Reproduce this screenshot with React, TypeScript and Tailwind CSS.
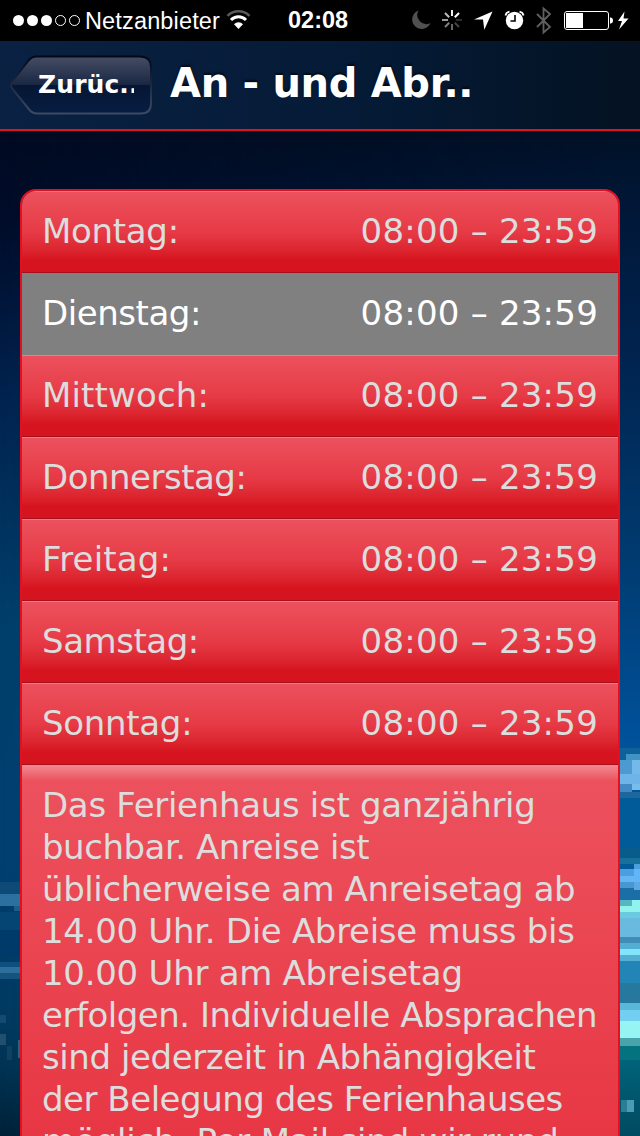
import { clsx } from "clsx"

const hours = [
  { day: "Montag:", time: "08:00 – 23:59", tracking: "tracking-[-0.3px]" },
  { day: "Dienstag:", time: "08:00 – 23:59", tracking: "tracking-[-0.45px]", active: true },
  { day: "Mittwoch:", time: "08:00 – 23:59", tracking: "tracking-[0.15px]" },
  { day: "Donnerstag:", time: "08:00 – 23:59", tracking: "tracking-[-0.5px]" },
  { day: "Freitag:", time: "08:00 – 23:59", tracking: "tracking-[0.15px]" },
  { day: "Samstag:", time: "08:00 – 23:59", tracking: "tracking-[-0.45px]" },
  { day: "Sonntag:", time: "08:00 – 23:59", tracking: "tracking-[-0.3px]" },
]

const description = [
  { text: "Das Ferienhaus ist ganzjährig", tracking: "tracking-[-0.31px]" },
  { text: "buchbar. Anreise ist", tracking: "tracking-[-0.47px]" },
  { text: "üblicherweise am Anreisetag ab", tracking: "tracking-[-0.41px]" },
  { text: "14.00 Uhr. Die Abreise muss bis", tracking: "tracking-[-0.3px]" },
  { text: "10.00 Uhr am Abreisetag", tracking: "tracking-[-0.27px]" },
  { text: "erfolgen. Individuelle Absprachen", tracking: "tracking-[-0.49px]" },
  { text: "sind jederzeit in Abhängigkeit", tracking: "tracking-[-0.41px]" },
  { text: "der Belegung des Ferienhauses", tracking: "tracking-[-0.48px]" },
  { text: "möglich. Per Mail sind wir rund", tracking: "tracking-[-0.2px]" },
]

// x, y, width, height, fill
const pixels: [number, number, number, number, string][] = [
  // left edge
  [0, 882, 20, 12, "#0e4a78"],
  [0, 894, 20, 12, "#2c70a0"],
  [14, 906, 6, 5, "#1c5d8d"],
  [0, 912, 20, 18, "#054573"],
  [0, 930, 20, 26, "#003a6b"],
  [0, 962, 20, 5, "#0d4f7e"],
  [0, 967, 20, 6, "#2d6f9a"],
  [0, 973, 20, 6, "#15547f"],
  [0, 1015, 6, 8, "#134a70"],
  [0, 1034, 6, 11, "#204f6f"],
  [7, 1046, 5, 14, "#12415f"],
  [18, 1040, 2, 18, "#2b6284"],
  // right edge
  [620, 748, 20, 12, "#0e6299"],
  [626, 754, 14, 10, "#3f94c4"],
  [620, 760, 20, 14, "#4b9bd0"],
  [632, 760, 8, 18, "#74b9ea"],
  [620, 774, 20, 10, "#6fb4e8"],
  [632, 784, 8, 6, "#76bdec"],
  [620, 784, 12, 8, "#4389c4"],
  [620, 792, 20, 6, "#1d679d"],
  [620, 798, 20, 50, "#005b98"],
  [620, 848, 20, 10, "#075c8c"],
  [620, 858, 20, 6, "#176f9c"],
  [634, 864, 6, 5, "#4b9fdc"],
  [620, 869, 14, 7, "#4c9ee0"],
  [634, 869, 6, 14, "#62b5f8"],
  [620, 876, 14, 6, "#64b5f4"],
  [620, 882, 20, 6, "#4797d3"],
  [620, 888, 20, 12, "#1b6fa6"],
  [634, 882, 6, 8, "#5ba9e0"],
  [620, 900, 20, 6, "#57b6c2"],
  [632, 900, 8, 12, "#90f3ef"],
  [620, 906, 12, 6, "#91f3e9"],
  [620, 912, 20, 6, "#69cbe0"],
  [620, 918, 20, 19, "#6ab9de"],
  [620, 937, 20, 6, "#408eb7"],
  [620, 943, 20, 6, "#54aed3"],
  [620, 949, 20, 6, "#83e5fb"],
  [620, 955, 20, 6, "#55afd5"],
  [620, 961, 20, 22, "#2385b5"],
  [620, 983, 20, 20, "#26789f"],
  [620, 1003, 20, 7, "#57b8dc"],
  [620, 1010, 20, 11, "#72cff2"],
  [620, 1021, 20, 17, "#96f4f2"],
  [620, 1038, 20, 8, "#49a3ab"],
  [620, 1046, 20, 14, "#04737f"],
  [621, 1100, 6, 12, "#2c7c95"],
  [627, 1100, 7, 12, "#4a9bb5"],
]

function Backdrop() {
  return (
    <svg className="absolute inset-0" width="640" height="1136" shapeRendering="crispEdges">
      <defs>
        <linearGradient id="night" x1="0" y1="0" x2="0" y2="1">
          <stop offset="0.11" stopColor="#000a20" />
          <stop offset="0.2" stopColor="#000d2b" />
          <stop offset="0.35" stopColor="#00234f" />
          <stop offset="0.55" stopColor="#003f6b" />
          <stop offset="0.76" stopColor="#003f70" />
          <stop offset="0.9" stopColor="#00395f" />
          <stop offset="0.94" stopColor="#003353" />
          <stop offset="1" stopColor="#012138" />
        </linearGradient>
        <linearGradient id="sea" x1="0" y1="0" x2="0" y2="1">
          <stop offset="0.11" stopColor="#001024" />
          <stop offset="0.18" stopColor="#001737" />
          <stop offset="0.32" stopColor="#002450" />
          <stop offset="0.5" stopColor="#003c72" />
          <stop offset="0.65" stopColor="#00519a" />
          <stop offset="0.84" stopColor="#006397" />
          <stop offset="0.93" stopColor="#00647a" />
          <stop offset="1" stopColor="#004a61" />
        </linearGradient>
        <linearGradient id="blend" x1="0" y1="0" x2="1" y2="0">
          <stop offset="0" stopColor="#fff" stopOpacity="0" />
          <stop offset="0.96" stopColor="#fff" stopOpacity="1" />
        </linearGradient>
        <mask id="fade">
          <rect width="640" height="1136" fill="url(#blend)" />
        </mask>
      </defs>
      <rect width="640" height="1136" fill="url(#night)" />
      <rect width="640" height="1136" fill="url(#sea)" mask="url(#fade)" />
      {pixels.map(([x, y, w, h, fill], i) => (
        <rect key={i} x={x} y={y} width={w} height={h} fill={fill} />
      ))}
    </svg>
  )
}

function StatusBar() {
  return (
    <div className="relative flex h-[41px] items-center bg-black text-white">
      <svg className="ml-3" width="70" height="41" viewBox="0 0 70 41">
        <circle cx="6.5" cy="20.5" r="5.5" fill="#fff" />
        <circle cx="20.5" cy="20.5" r="5.5" fill="#fff" />
        <circle cx="34.5" cy="20.5" r="5.5" fill="#fff" />
        <circle cx="48.5" cy="20.5" r="5" fill="none" stroke="#fff" />
        <circle cx="62.5" cy="20.5" r="5" fill="none" stroke="#fff" />
      </svg>
      <span className="ml-[3px] w-[136px] whitespace-nowrap pt-[3px] font-['Liberation_Sans',sans-serif] text-[23.5px] font-light tracking-[0.15px]">
        Netzanbieter
      </span>
      <svg className="ml-1" width="28" height="41" viewBox="0 0 28 41" fill="none">
        <path d="M2.5 15.800a15.500 15.500 0 0 1 22 0" stroke="#5a5a5a" strokeWidth="2.6" />
        <path d="M6 20a10.500 10.500 0 0 1 15 0" stroke="#fff" strokeWidth="3" />
        <path d="M9 24.3a6.2 6.2 0 0 1 9 0L13.5 29z" fill="#fff" />
      </svg>
      <span className="ml-[35px] w-[62px] whitespace-nowrap pt-px font-['Liberation_Sans',sans-serif] text-[23.5px] font-bold">
        02:08
      </span>
      <svg className="ml-auto" width="230" height="41" viewBox="410 0 230 41" fill="none">
        <path d="M418.600 10.500A9.500 9.500 0 1 0 430.500 23a9 9 0 0 1-11.900-12.500z" fill="#505050" />
        <g strokeWidth="2">
          <path d="M452 10v6" stroke="#eee" />
          <path d="M459 13l-4.2 4.2" stroke="#fff" />
          <path d="M462 20h-6" stroke="#2c2c2c" />
          <path d="M459 27l-4.2-4.2" stroke="#444" />
          <path d="M452 30v-6" stroke="#666" />
          <path d="M445 27l4.2-4.2" stroke="#808080" />
          <path d="M442 20h6" stroke="#999" />
          <path d="M445 13l4.2 4.2" stroke="#bbb" />
        </g>
        <path d="M492.500 11.500L474 19.500h9l1.300 10.300z" fill="#fff" />
        <circle cx="514.5" cy="20.5" r="8.7" fill="#fff" />
        <path d="M505.500 15.500q.5-3 4-3.800M523.500 15.500q-.5-3-4-3.800" stroke="#fff" strokeWidth="1.8" />
        <path d="M515 15v6h-4.5" stroke="#000" strokeWidth="1.6" />
        <path d="M537 14l13 13-6.5 5.5V8.500L550 14l-13 13" stroke="#606060" strokeWidth="1.8" />
        <rect x="564.5" y="11.500" width="44" height="18" rx="2.500" stroke="#fff" />
        <rect x="566" y="13" width="17" height="15" fill="#fff" />
        <path d="M610 17.200q3 .6 3 3.300t-3 3.300z" fill="#fff" />
        <path d="M624.500 11.500L618 21h4l-3 8.500 9.500-11h-5z" fill="#fff" />
      </svg>
    </div>
  )
}

function Header() {
  return (
    <div className="relative flex h-[90px] items-start border-b-2 border-[#e2121f] bg-linear-to-r from-[#0b2143] via-[#041a35] via-60% to-[#041222]">
      <button className="relative ml-2 mt-[13px] flex h-[62px] w-[145px] items-center pl-[30px]">
        <svg className="absolute inset-0" width="145" height="62" fill="none">
          <defs>
            <linearGradient id="glass" x1="0" y1="0" x2="0" y2="1">
              <stop offset="0" stopColor="#454d63" />
              <stop offset="0.5" stopColor="#1a2744" />
              <stop offset="0.5" stopColor="#061634" />
              <stop offset="1" stopColor="#071d42" />
            </linearGradient>
            <linearGradient id="rim" x1="0" y1="0" x2="0" y2="1">
              <stop offset="0" stopColor="#01081a" />
              <stop offset="0.5" stopColor="#1c2940" />
              <stop offset="1" stopColor="#3c4a63" />
            </linearGradient>
          </defs>
          <path
            d="M28 2.500h104q11 0 11 11v36q0 10-10 10H29q-4 0-7-3L4.500 35q-3-4 0-8L21 6q3-3.500 7-3.500z"
            fill="url(#glass)"
            stroke="url(#rim)"
            strokeWidth="2"
          />
        </svg>
        <span className="relative w-24 overflow-hidden whitespace-nowrap pb-px text-left text-[25px] font-bold tracking-[0.1px] text-white">
          Zurüc...
        </span>
      </button>
      <h1 className="ml-[17px] mt-[17px] w-[301px] overflow-hidden whitespace-nowrap text-[40px] font-bold leading-[50px] tracking-[-0.3px] text-white [text-shadow:0_-2px_2px_#000a]">
        An - und Abr..
      </h1>
    </div>
  )
}

export default function App() {
  return (
    <div className="relative h-[1136px] w-[640px] overflow-hidden bg-[#000d2b] font-['DejaVu_Sans',sans-serif]">
      <Backdrop />
      <StatusBar />
      <Header />

      {/* Opening hours */}
      <div className="relative mx-5 mt-[58px] overflow-hidden rounded-t-2xl border-2 border-b-0 border-[#e4101f] text-[34px] text-[#dddddd]">
        {hours.map((row) => (
          <div
            key={row.day}
            className={clsx(
              "flex h-[82px] items-center justify-between border-t border-b px-5 pb-0.5",
              row.active
                ? "border-[#808080] bg-[#808080] text-white"
                : "border-t-[#f07c85] border-b-[#a90f1b] bg-linear-to-b from-[#ec515d] via-[#e63a46] via-50% to-[#d61420] to-85%"
            )}
          >
            <span className={row.tracking}>{row.day}</span>
            <span className="tracking-[0.22px]">{row.time}</span>
          </div>
        ))}

        {/* Description */}
        <div className="h-[500px] bg-[linear-gradient(to_bottom,#f18a92_0,#ec515d_16px,#e83744_370px)] px-5 pt-[19px] leading-[42px]">
          {description.map((line) => (
            <p key={line.text} className={clsx("whitespace-nowrap", line.tracking)}>
              {line.text}
            </p>
          ))}
        </div>
      </div>
    </div>
  )
}
